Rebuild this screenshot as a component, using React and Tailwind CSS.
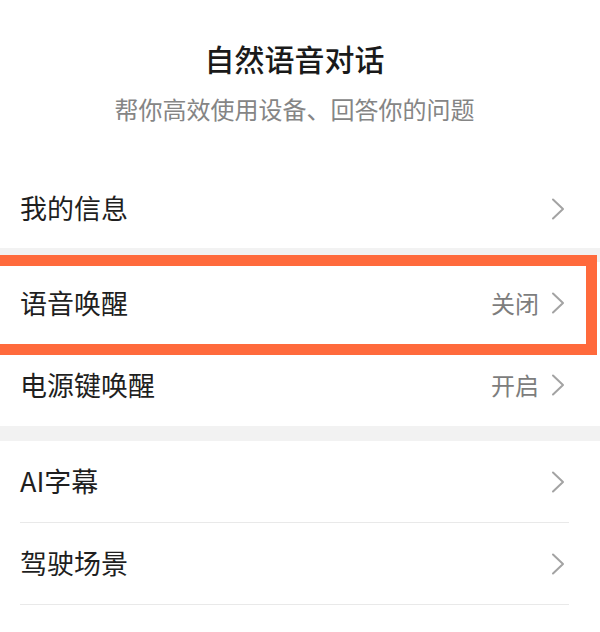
import React from "react";

const Chevron = () => (
  <svg width="14" height="22" viewBox="0 0 14 22" fill="none" className="shrink-0">
    <path d="M2 1.5 L12 11 L2 20.5" stroke="#a3a3a3" strokeWidth="2" strokeLinecap="round" strokeLinejoin="round" />
  </svg>
);

const Row = ({ label, value, divider, highlight }) => (
  <div className="relative bg-white">
    <div className={`ml-5 mr-[31px] flex h-[82px] items-center justify-between ${divider ? "border-b border-[#e9e9e9]" : ""}`}>
      <span className="text-[27px] text-[#1f1f1f]">{label}</span>
      <div className="flex items-center gap-3 pr-1">
        {value && <span className="text-[24px] text-[#7d7d7d]">{value}</span>}
        <Chevron />
      </div>
    </div>
    {highlight && (
      <div className="pointer-events-none absolute -left-4 -top-[7px] right-[3px] -bottom-[11px] z-10 border-[11px] border-[#ff6a3c]" />
    )}
  </div>
);

export default function App() {
  return (
    <div
      className="h-[632px] w-[600px] overflow-hidden bg-white"
      style={{ fontFamily: '"Noto Sans CJK SC", "Noto Sans", sans-serif' }}
    >
      <div className="flex h-[169px] flex-col items-center pr-[11px] pt-[38px]">
        <h1 className="text-[30px] font-medium leading-[40px] text-[#1a1a1a]">自然语音对话</h1>
        <p className="mt-[15px] text-[24px] leading-[32px] text-[#858585]">帮你高效使用设备、回答你的问题</p>
      </div>

      <div className="h-[79px]">
        <div className="ml-5 mr-[31px] flex h-full items-center justify-between">
          <span className="text-[27px] text-[#1f1f1f]">我的信息</span>
          <div className="pr-1">
            <Chevron />
          </div>
        </div>
      </div>

      <div className="h-[14px] bg-[#f2f2f2]" />

      <Row label="语音唤醒" value="关闭" highlight />
      <Row label="电源键唤醒" value="开启" />

      <div className="h-[15px] bg-[#f2f2f2]" />

      <Row label="AI字幕" divider />
      <Row label="驾驶场景" divider />
    </div>
  );
}
